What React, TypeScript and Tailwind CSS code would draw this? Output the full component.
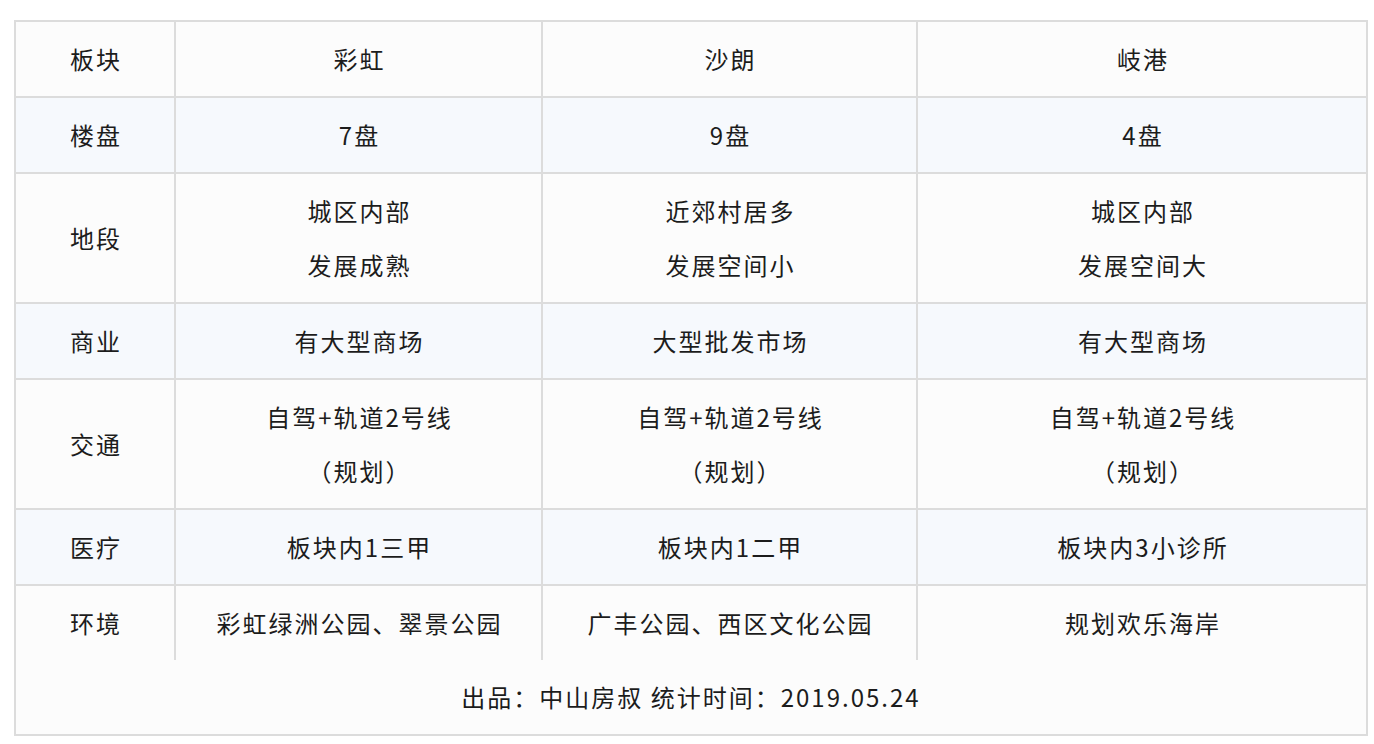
import React from "react";

type Row = {
  label: string;
  cells: string[][];
  shaded?: boolean;
};

const rows: Row[] = [
  { label: "板块", cells: [["彩虹"], ["沙朗"], ["岐港"]] },
  { label: "楼盘", cells: [["7盘"], ["9盘"], ["4盘"]], shaded: true },
  {
    label: "地段",
    cells: [
      ["城区内部", "发展成熟"],
      ["近郊村居多", "发展空间小"],
      ["城区内部", "发展空间大"],
    ],
  },
  {
    label: "商业",
    cells: [["有大型商场"], ["大型批发市场"], ["有大型商场"]],
    shaded: true,
  },
  {
    label: "交通",
    cells: [
      ["自驾+轨道2号线", "（规划）"],
      ["自驾+轨道2号线", "（规划）"],
      ["自驾+轨道2号线", "（规划）"],
    ],
  },
  {
    label: "医疗",
    cells: [["板块内1三甲"], ["板块内1二甲"], ["板块内3小诊所"]],
    shaded: true,
  },
  {
    label: "环境",
    cells: [["彩虹绿洲公园、翠景公园"], ["广丰公园、西区文化公园"], ["规划欢乐海岸"]],
  },
];

function Cell({ lines, shaded }: { lines: string[]; shaded?: boolean }) {
  return (
    <div
      className={`flex flex-col items-center justify-center py-[10px] ${
        shaded ? "bg-[#f6f9fd]" : "bg-[#fcfcfc]"
      }`}
    >
      {lines.map((line, i) => (
        <div key={i} className="leading-[54px] pl-[2px]">
          {line}
        </div>
      ))}
    </div>
  );
}

export default function App() {
  return (
    <div className="min-h-screen bg-white pt-[20px] pl-[14px]">
      <div
        className="w-[1354px] border-2 border-[#dcdcdc] bg-[#fcfcfc] text-[24px] tracking-[2px] text-[#1c1c1c]"
        style={{ fontFamily: '"Noto Sans CJK SC", "Noto Sans", sans-serif' }}
      >
        <div className="grid grid-cols-[158px_365px_373px_448px] gap-[2px] bg-[#dcdcdc]">
          {rows.map((row) => (
            <React.Fragment key={row.label}>
              <Cell lines={[row.label]} shaded={row.shaded} />
              {row.cells.map((c, i) => (
                <Cell key={i} lines={c} shaded={row.shaded} />
              ))}
            </React.Fragment>
          ))}
        </div>
        <div className="flex h-[74px] items-center justify-center bg-[#fcfcfc] leading-[54px]">
          出品：中山房叔 统计时间：2019.05.24
        </div>
      </div>
    </div>
  );
}
